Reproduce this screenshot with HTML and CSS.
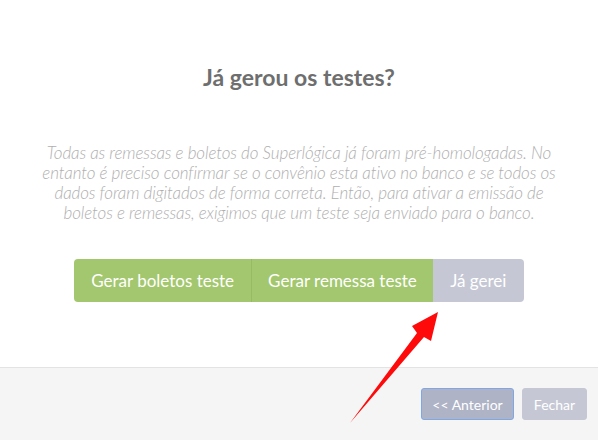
FILE: index.html
```html
<!DOCTYPE html>
<html lang="pt-BR">
<head>
    <meta charset="utf-8">
    <title>Já gerou os testes?</title>
    <link rel="stylesheet" href="styles.css">
</head>
<body>
<div class="modal">
    <div class="modal-body">
        <h2 class="modal-title">Já gerou os testes?</h2>
        <p class="modal-text">Todas as remessas e boletos do Superlógica já foram pré-homologadas. No entanto é preciso confirmar se o convênio esta ativo no banco e se todos os dados foram digitados de forma correta. Então, para ativar a emissão de boletos e remessas, exigimos que um teste seja enviado para o banco.</p>
        <div class="btn-group">
            <button class="btn btn-green">Gerar boletos teste</button>
            <button class="btn btn-green">Gerar remessa teste</button>
            <button class="btn btn-gray">Já gerei</button>
        </div>
    </div>
    <div class="modal-footer">
        <button class="btn-small btn-prev">&lt;&lt; Anterior</button>
        <button class="btn-small btn-close">Fechar</button>
    </div>
    <svg class="arrow" width="598" height="440" viewBox="0 0 598 440">
        <polygon points="350,423 417,333 412,326 438,312 431,341 424,337" fill="#ff0a0a"/>
    </svg>
</div>
</body>
</html>
```

FILE: styles.css
```css
* {
    box-sizing: border-box;
}

body {
    margin: 0;
    font-family: Lato, "Open Sans", sans-serif;
    background-color: #ffffff;
}

.modal {
    position: relative;
    width: 598px;
    height: 440px;
    display: flex;
    flex-direction: column;
}

.modal-body {
    height: 367px;
    padding: 63px 38px 0;
    display: flex;
    flex-direction: column;
    align-items: center;
}

.modal-title {
    margin: 0;
    font-size: 23px;
    font-weight: 700;
    color: #6e6e6e;
    line-height: 28px;
}

.modal-text {
    margin: 52px 0 0;
    font-size: 17px;
    font-style: italic;
    font-weight: 300;
    line-height: 20px;
    letter-spacing: -0.1px;
    color: #afafaf;
    text-align: center;
}

.btn-group {
    display: flex;
    margin-top: 36px;
    border-radius: 4px;
    overflow: hidden;
}

.btn {
    border: none;
    height: 43px;
    padding: 0 17px;
    font-family: Lato, sans-serif;
    font-size: 17px;
    color: #ffffff;
}

.btn-green {
    background-color: #a3c76e;
}

.btn-green + .btn-green {
    border-left: 1px solid #97bb62;
    padding: 0 16px;
}

.btn-gray {
    background-color: #c5c8d4;
    width: 91px;
}

.modal-footer {
    flex: 1;
    background-color: #f5f5f5;
    border-top: 1px solid #e3e3e3;
    display: flex;
    justify-content: flex-end;
    align-items: flex-start;
    gap: 8px;
    padding: 20px 11px 0 0;
}

.btn-small {
    height: 32px;
    border-radius: 3px;
    font-family: Lato, sans-serif;
    font-size: 14px;
    color: #ffffff;
    border: 1px solid #c5c8d4;
    background-color: #c5c8d4;
}

.btn-prev {
    width: 93px;
    background-color: #aeb3c6;
    border-color: #7fa7e6;
}

.btn-close {
    width: 65px;
}

.arrow {
    position: absolute;
    left: 0;
    top: 0;
    pointer-events: none;
}
```
